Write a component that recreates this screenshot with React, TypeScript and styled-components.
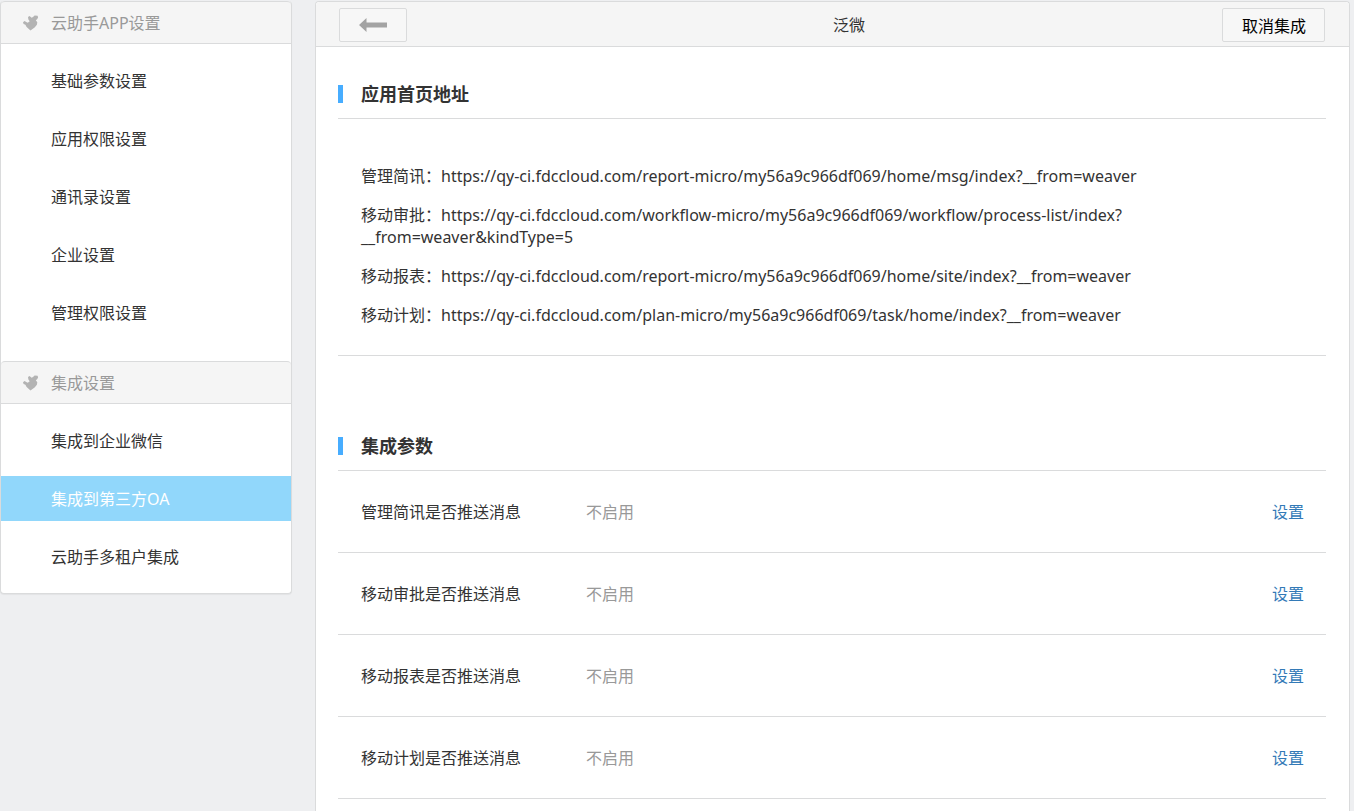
import React from "react";
import styled, { createGlobalStyle } from "styled-components";

const GlobalStyle = createGlobalStyle`
  *, *::before, *::after { box-sizing: border-box; }
  body {
    margin: 0;
    background: #eeeff1;
    color: #333;
    font-family: "Noto Sans", "Noto Sans CJK SC", sans-serif;
    font-size: 16px;
    line-height: 22px;
  }
`;

const line = "#dadbdc";

const Page = styled.div`
  display: flex;
  align-items: flex-start;
  gap: 23px;
  min-height: 100vh;
  padding: 1px 4px 0 0;
`;

const Sidebar = styled.nav`
  flex: none;
  width: 292px;
  background: #fff;
  border: 1px solid ${line};
  border-top: 0;
  border-radius: 4px;
  box-shadow: 0 1px 1px rgba(0, 0, 0, 0.05);
`;

const GroupHeader = styled.h2`
  display: flex;
  align-items: center;
  gap: 12px;
  height: 43px;
  margin: 0;
  padding: 1px 21px 0;
  border: solid ${line};
  border-width: 1px 0;
  border-radius: 4px 4px 0 0;
  background: #f5f5f5;
  color: #999;
  font-size: 16px;
  font-weight: 400;
`;

const Menu = styled.ul<{ $last?: boolean }>`
  display: flex;
  flex-direction: column;
  gap: 13px;
  margin: 0;
  padding: 14px 0 ${(p) => (p.$last ? 14 : 26)}px;
  list-style: none;
`;

const MenuLink = styled.a<{ $active?: boolean }>`
  display: block;
  padding: 2px 50px 0;
  line-height: 43px;
  text-decoration: none;
  color: ${(p) => (p.$active ? "#fff" : "#333")};
  background: ${(p) => (p.$active ? "#91d7fb" : "transparent")};
`;

const Main = styled.main`
  flex: 1;
  min-width: 0;
  min-height: calc(100vh - 1px);
  background: #fff;
  border: 1px solid ${line};
  border-bottom: 0;
  border-radius: 4px 4px 0 0;
`;

const TopBar = styled.header`
  display: grid;
  grid-template-columns: 1fr auto 1fr;
  align-items: center;
  height: 45px;
  padding: 2px 24px 0 23px;
  border-bottom: 1px solid ${line};
  border-radius: 4px 4px 0 0;
  background: #f5f5f5;
`;

const PageTitle = styled.h1`
  margin: 0;
  padding-left: 34px;
  font-size: 16px;
  font-weight: 400;
`;

const Button = styled.button<{ $end?: boolean }>`
  display: flex;
  align-items: center;
  justify-content: center;
  justify-self: ${(p) => (p.$end ? "end" : "start")};
  min-width: 68px;
  height: 34px;
  padding: ${(p) => (p.$end ? "2px 18px 0 19px" : "0")};
  border: 1px solid ${line};
  border-radius: 2px;
  background: #f7f7f7;
  color: #000;
  font: inherit;
  cursor: pointer;
`;

const Content = styled.div`
  display: flex;
  flex-direction: column;
  gap: 76px;
  padding: 33px 23px 0 22px;
`;

const SectionTitle = styled.h2`
  display: flex;
  align-items: center;
  gap: 18px;
  height: 39px;
  margin: 0;
  padding-bottom: 10px;
  border-bottom: 1px solid ${line};
  font-size: 18px;
  font-weight: 700;

  &::before {
    content: "";
    width: 5px;
    height: 18px;
    background: #47adff;
  }
`;

const UrlList = styled.ul`
  display: flex;
  flex-direction: column;
  gap: 17px;
  margin: 0;
  padding: 46px 160px 29px 23px;
  border-bottom: 1px solid ${line};
  list-style: none;
`;

const SettingList = styled.dl`
  margin: 0;
`;

const Setting = styled.div`
  display: flex;
  align-items: center;
  height: 82px;
  padding: 0 22px 0 23px;
  border-bottom: 1px solid ${line};
`;

const SettingName = styled.dt`
  width: 225px;
`;

const SettingValue = styled.dd`
  flex: 1;
  margin: 0;
  color: #999;
`;

const SettingAction = styled.dd`
  margin: 0;
`;

const ActionLink = styled.a`
  color: #337ab7;
  text-decoration: none;
`;

const BirdIcon = () => (
  <svg width="17" height="16" viewBox="0 0 17 16" fill="#b3b3b3" aria-hidden="true">
    <path d="M1 7.2 2.6 6l1.6.9 1.6.9L7.7 6.2 6.4 4.4 6 2l1.6-.9 2 1.7L11 2l1.6-1.5 3 .3.5 1.7-1 1.7-1.3 1.1 1.5 1.9-.4 2.6-2.3 2.6L8.5 15.5 4.6 12 3.4 9.8 1.6 9z" />
  </svg>
);

const ArrowIcon = () => (
  <svg width="28" height="14" viewBox="0 0 28 14" fill="#a3a3a3" aria-hidden="true">
    <path d="M0 7 7.5 0v4.5H28v5H7.5V14z" />
  </svg>
);

const groups = [
  {
    title: "云助手APP设置",
    items: ["基础参数设置", "应用权限设置", "通讯录设置", "企业设置", "管理权限设置"],
  },
  {
    title: "集成设置",
    items: ["集成到企业微信", "集成到第三方OA", "云助手多租户集成"],
  },
];

const current = "集成到第三方OA";

const host = "https://qy-ci.fdccloud.com";

const urls = [
  { name: "管理简讯", path: "/report-micro/my56a9c966df069/home/msg/index?__from=weaver" },
  {
    name: "移动审批",
    path: "/workflow-micro/my56a9c966df069/workflow/process-list/index?__from=weaver&kindType=5",
  },
  { name: "移动报表", path: "/report-micro/my56a9c966df069/home/site/index?__from=weaver" },
  { name: "移动计划", path: "/plan-micro/my56a9c966df069/task/home/index?__from=weaver" },
];

export default function App() {
  return (
    <>
      <GlobalStyle />
      <Page>
        <Sidebar>
          {groups.map((group, i) => (
            <React.Fragment key={group.title}>
              <GroupHeader>
                <BirdIcon />
                {group.title}
              </GroupHeader>
              <Menu $last={i === groups.length - 1}>
                {group.items.map((item) => (
                  <li key={item}>
                    <MenuLink href="#" $active={item === current}>
                      {item}
                    </MenuLink>
                  </li>
                ))}
              </Menu>
            </React.Fragment>
          ))}
        </Sidebar>
        <Main>
          <TopBar>
            <Button type="button" aria-label="返回">
              <ArrowIcon />
            </Button>
            <PageTitle>泛微</PageTitle>
            <Button type="button" $end>
              取消集成
            </Button>
          </TopBar>
          <Content>
            <section>
              <SectionTitle>应用首页地址</SectionTitle>
              <UrlList>
                {urls.map((url) => (
                  <li key={url.name}>{`${url.name}：${host}${url.path}`}</li>
                ))}
              </UrlList>
            </section>
            <section>
              <SectionTitle>集成参数</SectionTitle>
              <SettingList>
                {urls.map(({ name }) => (
                  <Setting key={name}>
                    <SettingName>{`${name}是否推送消息`}</SettingName>
                    <SettingValue>不启用</SettingValue>
                    <SettingAction>
                      <ActionLink href="#">设置</ActionLink>
                    </SettingAction>
                  </Setting>
                ))}
              </SettingList>
            </section>
          </Content>
        </Main>
      </Page>
    </>
  );
}
